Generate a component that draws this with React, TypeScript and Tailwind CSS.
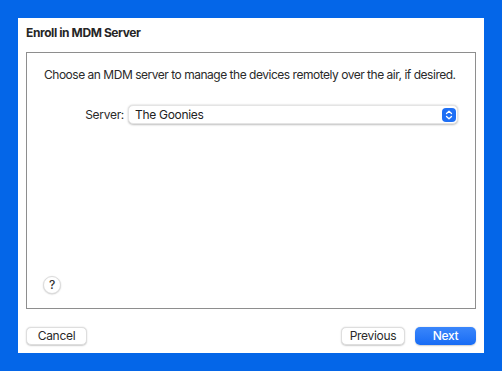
export default function App() {
  return (
    <div
      className="w-[502px] h-[371px] bg-[#0466e8] p-[18px] text-[#222] tracking-[-0.3px]"
      style={{ fontFamily: 'Inter, "Noto Sans", sans-serif' }}
    >
      <div className="w-[466px] h-[335px] bg-white px-2 flex flex-col">
        <div className="h-[34px] pt-[8px] text-[12px] leading-[14px] font-bold text-[#262626] tracking-[-0.4px]">
          Enroll in MDM Server
        </div>

        <div className="h-[257px] border border-[#8e8e8e] flex flex-col">
          <p className="pt-[14px] pl-[17px] text-[12px] leading-[16px] text-[#2a2a2a] whitespace-nowrap tracking-[-0.48px]">
            Choose an MDM server to manage the devices remotely over the air, if desired.
          </p>

          <div className="mt-[22px] flex items-center">
            <span className="w-[97px] text-right text-[12px] text-[#2a2a2a]">Server:</span>
            <div className="ml-[4px] w-[330px] h-[19px] rounded-[5px] bg-white shadow-[0_0.5px_2px_rgba(0,0,0,0.25)] border border-[#e4e4e4] flex items-center justify-between pl-[6px] pr-[1px]">
              <span className="text-[12px] text-[#222]">The Goonies</span>
              <span className="w-[14px] h-[14px] rounded-[4px] bg-[#1e6ff5] flex items-center justify-center">
                <svg width="8" height="10" viewBox="0 0 8 10" fill="none">
                  <path d="M1.5 3.5 L4 1.2 L6.5 3.5" stroke="white" strokeWidth="1.3" strokeLinecap="round" strokeLinejoin="round" />
                  <path d="M1.5 6.5 L4 8.8 L6.5 6.5" stroke="white" strokeWidth="1.3" strokeLinecap="round" strokeLinejoin="round" />
                </svg>
              </span>
            </div>
          </div>

          <div className="flex-1" />

          <div className="pl-[16px] pb-[14px]">
            <div className="w-[18px] h-[18px] rounded-full bg-white border border-[#dcdcdc] shadow-[0_0.5px_1.5px_rgba(0,0,0,0.2)] flex items-center justify-center text-[12px] font-medium text-[#333]">
              ?
            </div>
          </div>
        </div>

        <div className="mt-[18px] flex items-center">
          <button className="w-[61px] h-[18px] rounded-[5px] bg-white border border-[#dedede] shadow-[0_0.5px_1.5px_rgba(0,0,0,0.2)] text-[12px] leading-none text-[#2a2a2a]">
            Cancel
          </button>
          <div className="flex-1" />
          <button className="w-[64px] h-[18px] rounded-[5px] bg-white border border-[#dedede] shadow-[0_0.5px_1.5px_rgba(0,0,0,0.2)] text-[12px] leading-none text-[#2a2a2a]">
            Previous
          </button>
          <button className="ml-[10px] w-[61px] h-[18px] rounded-[5px] bg-gradient-to-b from-[#3a86fb] to-[#166cf5] text-[12px] leading-none font-medium text-white shadow-[0_0.5px_1.5px_rgba(0,0,0,0.2)]">
            Next
          </button>
        </div>
      </div>
    </div>
  )
}
